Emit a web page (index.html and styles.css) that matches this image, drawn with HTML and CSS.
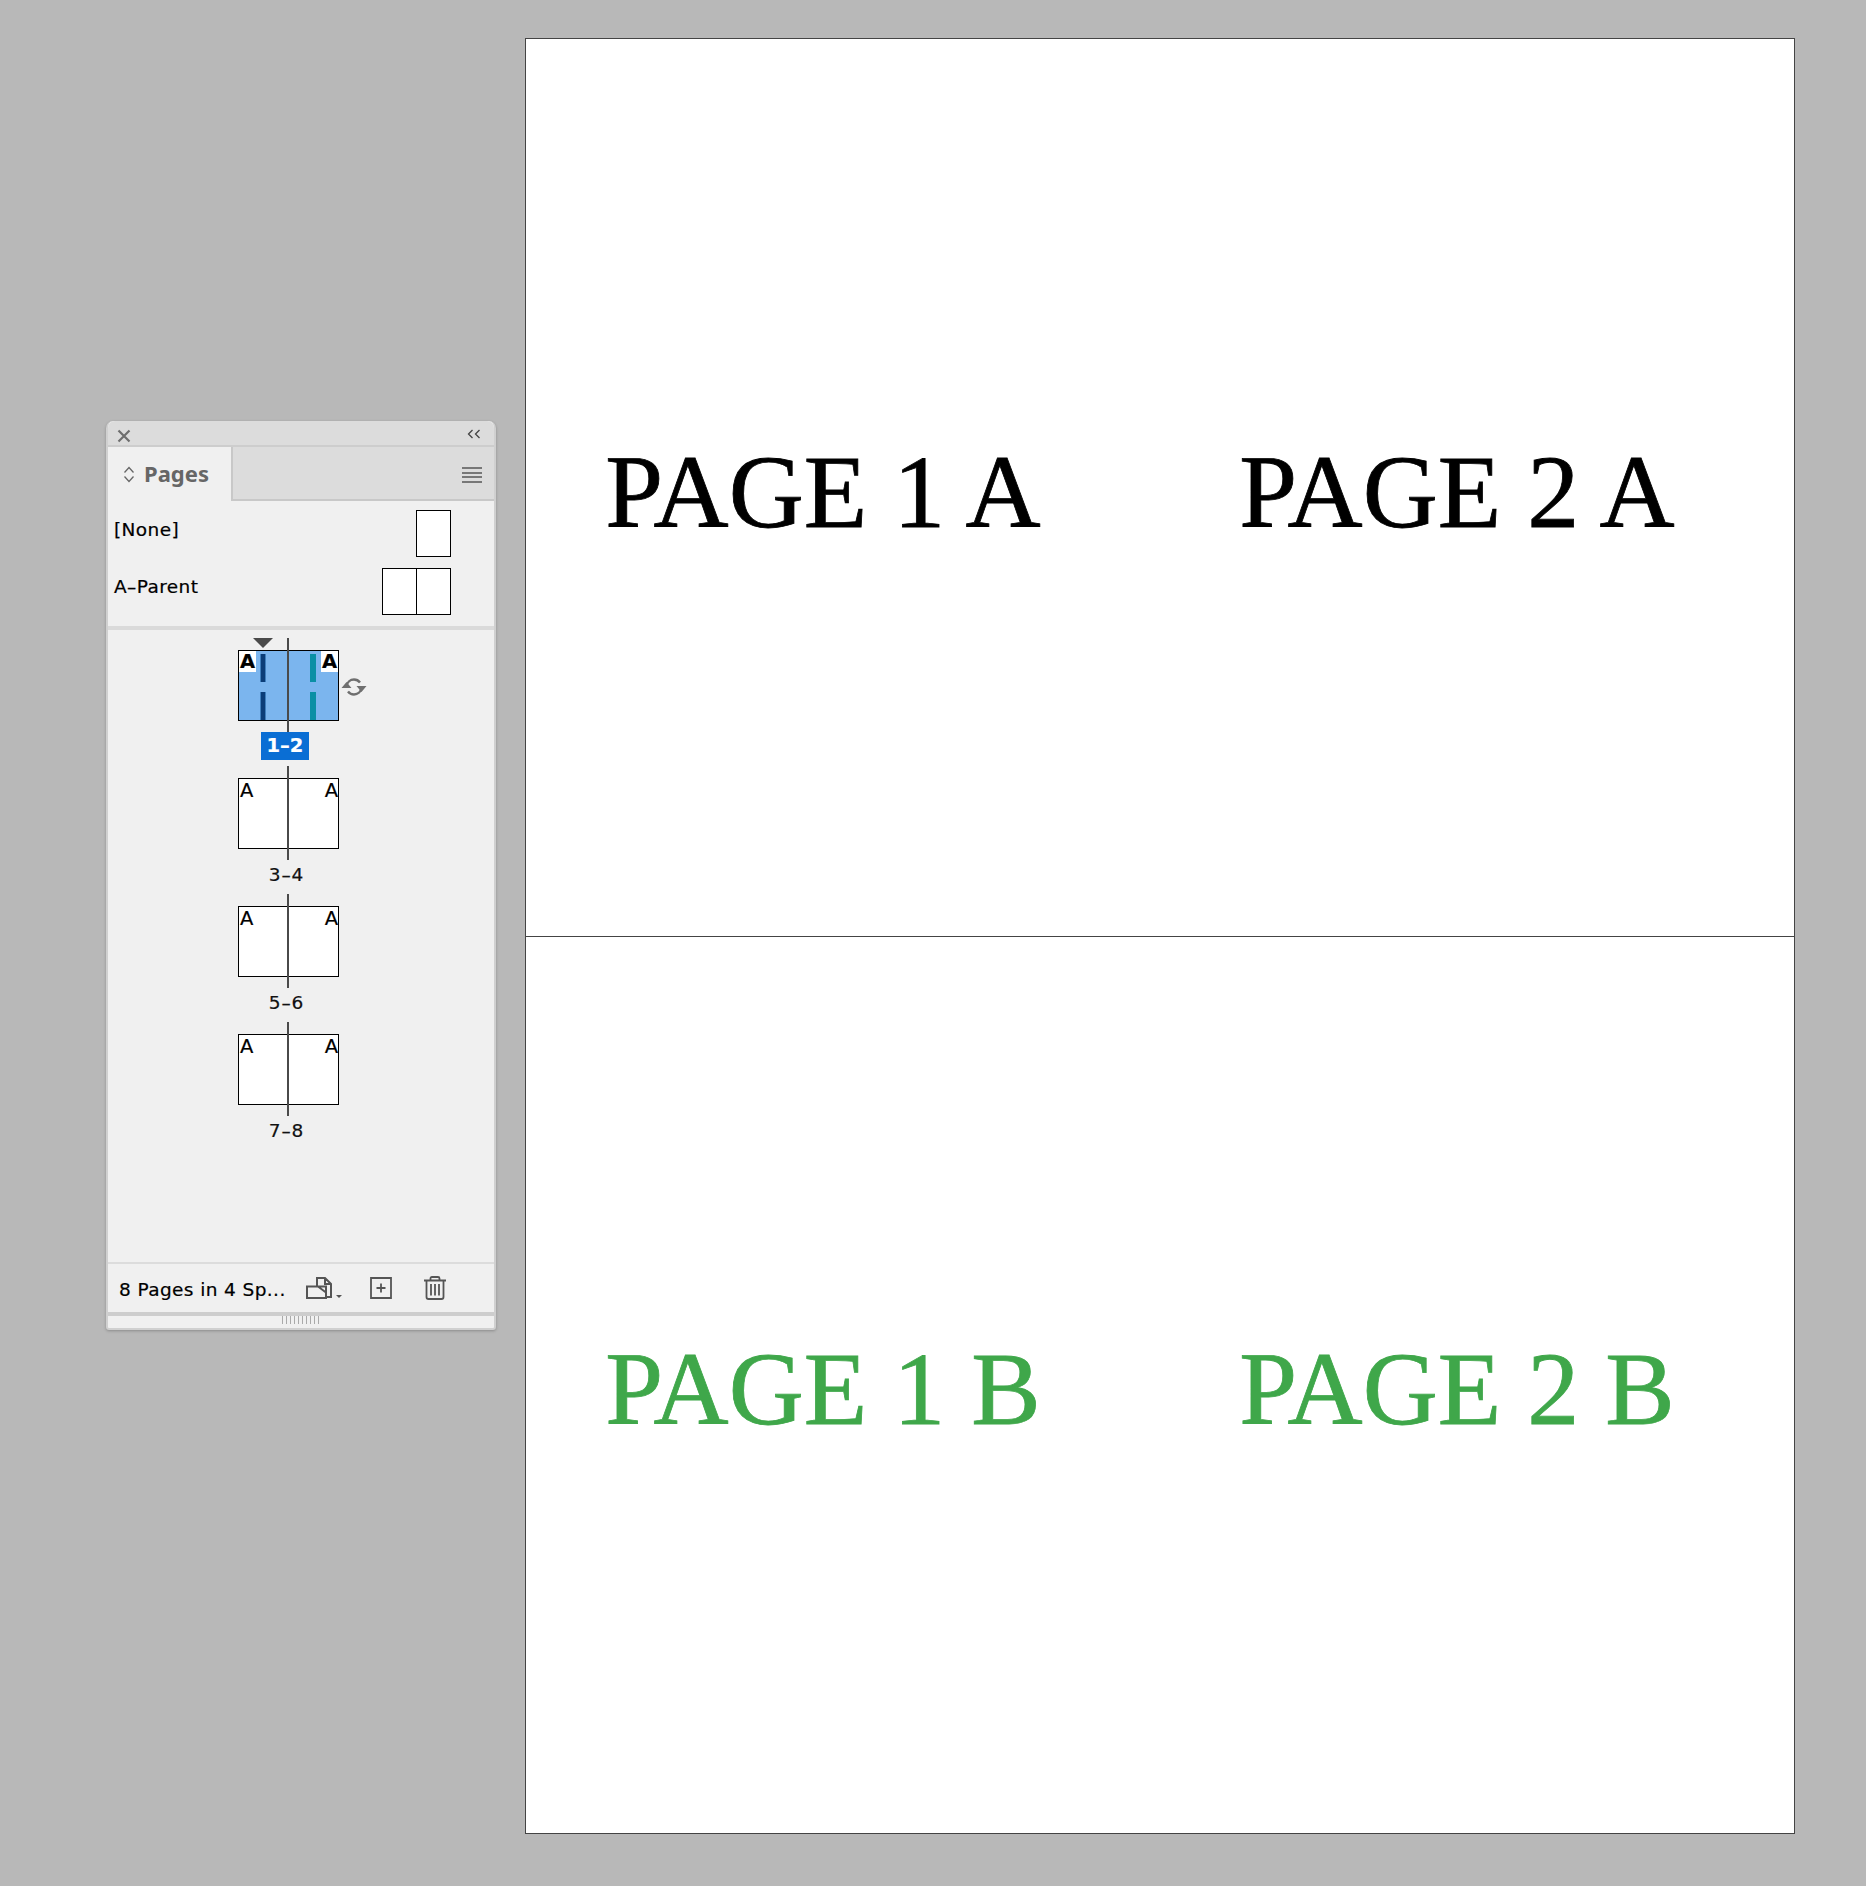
FILE: index.html
```html
<!DOCTYPE html>
<html lang="en">
	<head>
		<meta charset="UTF-8" />
		<title>Pages</title>
		<link rel="stylesheet" href="styles.css">
	</head>
	<body>
		<div class="panel">
			<div class="titlebar">
				<svg class="close" width="14" height="14" viewBox="0 0 14 14"><path d="M1.500 1.500l11 11M12.500 1.500l-11 11" stroke="#6e6e6e" stroke-width="2.200" fill="none"/></svg>
				<svg class="collapse" width="14" height="10" viewBox="0 0 14 10"><path d="M5.500 1L1.500 5l4 4M12.500 1l-4 4 4 4" stroke="#444" stroke-width="1.300" fill="none"/></svg>
			</div>
			<div class="tabbar">
				<div class="tab">
					<svg width="12" height="17" viewBox="0 0 12 17"><path d="M1.500 6.500L6 1.500l4.500 5M1.500 10.500L6 15.500l4.500-5" stroke="#666" stroke-width="1.300" fill="none"/></svg>
					<span>Pages</span>
				</div>
				<div class="burger"><i></i><i></i><i></i><i></i></div>
			</div>
			<div class="parents">
				<div class="parent">
					<span>[None]</span>
					<div class="thumb"><b></b></div>
				</div>
				<div class="parent">
					<span>A–Parent</span>
					<div class="thumb"><b></b><b></b></div>
				</div>
			</div>
			<div class="spreads">
				<div class="spread current">
					<div class="marker"></div>
					<div class="sheet">
						<div class="leaf"><em>A</em><s class="bar navy top"></s><s class="bar navy bottom"></s></div>
						<div class="leaf right"><em>A</em><s class="bar teal top"></s><s class="bar teal bottom"></s></div>
					</div>
					<svg class="rotate" width="27" height="20" viewBox="0 0 27 20"><path d="M5.500 9.500C6 5 9.500 2.500 13 2.500c2.500 0 4.500 1 6 3M20.500 10.500c-.5 4.500-4 7-7.500 7-2.500 0-4.500-1-6-3" stroke="#6f6f6f" stroke-width="2.400" fill="none"/><path d="M5.500 5L.5 11h10zM20.500 15l-5-6h10z" fill="#6f6f6f"/></svg>
					<div class="label">1–2</div>
				</div>
				<div class="spread">
					<div class="sheet">
						<div class="leaf"><em>A</em></div>
						<div class="leaf right"><em>A</em></div>
					</div>
					<div class="label">3–4</div>
				</div>
				<div class="spread">
					<div class="sheet">
						<div class="leaf"><em>A</em></div>
						<div class="leaf right"><em>A</em></div>
					</div>
					<div class="label">5–6</div>
				</div>
				<div class="spread">
					<div class="sheet">
						<div class="leaf"><em>A</em></div>
						<div class="leaf right"><em>A</em></div>
					</div>
					<div class="label">7–8</div>
				</div>
			</div>
			<div class="foot">
				<span class="count">8 Pages in 4 Sp...</span>
				<svg class="foot-ico" width="32" height="24" viewBox="0 0 32 24"><path d="M1 10.500h19v11.500H1zM11 10.500V2h8l6 6v13h-5M19 2v6h6M12 10.500l8 6" stroke="#555" stroke-width="2" fill="none"/><path d="M30 19h6l-3 3z" fill="#555"/></svg>
				<svg class="foot-ico" width="22" height="22" viewBox="0 0 22 22"><path d="M1 1h20v20H1zM11 6.500v9M6.500 11h9" stroke="#555" stroke-width="1.800" fill="none"/></svg>
				<svg class="foot-ico" width="22" height="24" viewBox="0 0 22 24"><path d="M0 4.500h22M6.500 4.500V2.500Q6.500 1 8 1h6q1.500 0 1.500 1.500v2M2.500 4.500V21q0 2 2 2h13q2 0 2-2V4.500M7 8v11.500M11 8v11.500M15 8v11.500" stroke="#555" stroke-width="1.800" fill="none"/></svg>
			</div>
			<div class="grip"><div></div></div>
		</div>

		<div class="doc">
			<div class="page">
				<span>PAGE 1 A</span>
				<span>PAGE 2 A</span>
			</div>
			<div class="page green">
				<span>PAGE 1 B</span>
				<span>PAGE 2 B</span>
			</div>
		</div>
	</body>
</html>
```

FILE: styles.css
```css
body {
	margin: 0;
	box-sizing: border-box;
	height: 1886px;
	padding: 38px 71px 52px 106px;
	background: #b8b8b8;
	display: flex;
	align-items: flex-start;
	gap: 29px;
	font-family: "DejaVu Sans", sans-serif;
	overflow: hidden;
}

/* panel */
.panel {
	width: 390px;
	margin-top: 383px;
	box-sizing: border-box;
	background: #f0f0f0;
	border: 2px solid #d0d0d0;
	border-top: 0;
	border-radius: 7px 7px 3px 3px;
	box-shadow: 0 1px 3px rgba(0, 0, 0, 0.25);
	color: #000;
	font-size: 18.5px;
	letter-spacing: 0.4px;
	-webkit-text-stroke: 0.2px currentColor;
}
.titlebar {
	height: 24px;
	padding: 0 13px 0 9px;
	display: flex;
	align-items: center;
	justify-content: space-between;
	background: #dcdcdc;
	border-bottom: 2px solid #cdcdcd;
	border-radius: 7px 7px 0 0;
}
.close {
	margin-top: 5px;
}
.collapse {
	margin-top: 2px;
}
.tabbar {
	height: 52px;
	display: flex;
	justify-content: space-between;
	background: #dcdcdc;
	border-bottom: 2px solid #c8c8c8;
}
.tab {
	width: 125px;
	height: 54px;
	padding-left: 15px;
	box-sizing: border-box;
	display: flex;
	align-items: center;
	gap: 9px;
	background: #f0f0f0;
	border-right: 2px solid #c8c8c8;
	color: #666;
	font-family: "Noto Sans", sans-serif;
	font-size: 22px;
	font-weight: 700;
	letter-spacing: 0;
	-webkit-text-stroke: 0;
}
.tab span {
	margin-top: -2px;
}
.burger {
	width: 20px;
	margin: 20px 12px 0 0;
	display: flex;
	flex-direction: column;
	gap: 2.500px;
}
.burger i {
	display: block;
	height: 2px;
	background: #777;
}
.parents {
	padding-top: 9px;
	height: 129px;
	box-sizing: border-box;
	border-bottom: 4px solid #dadada;
}
.parent {
	height: 47px;
	margin-bottom: 11px;
	padding: 0 43px 0 6px;
	display: flex;
	justify-content: space-between;
}
.parent span {
	padding-top: 9px;
	line-height: 22px;
}
.parent + .parent span {
	padding-top: 8px;
}
.thumb {
	display: flex;
	height: 47px;
	border: 1px solid #000;
	box-sizing: border-box;
	background: #fff;
}
.thumb b {
	display: block;
	width: 33px;
}
.thumb b + b {
	border-left: 1px solid #000;
}

/* spreads */
.spreads {
	height: 632px;
	padding-top: 8px;
	box-sizing: border-box;
}
.spread {
	position: relative;
	width: 101px;
	height: 128px;
	margin-left: 130px;
}
.sheet {
	position: relative;
	top: 12px;
	display: flex;
	height: 71px;
	box-sizing: border-box;
	border: 1px solid #000;
	background: #fff;
}
.sheet::after {
	content: "";
	position: absolute;
	left: 48px;
	top: -13px;
	width: 2px;
	height: 94px;
	background: #4a4a4a;
}
.leaf {
	position: relative;
	flex: 1;
	font-size: 19.5px;
	line-height: 22px;
	letter-spacing: 0;
}
.leaf em {
	position: absolute;
	top: 1px;
	left: 1px;
	font-style: normal;
}
.leaf.right em {
	left: auto;
	right: 0;
}
.current .sheet {
	background: #7bb5ee;
}
.current .leaf em {
	left: 0;
	height: 21px;
	padding: 0 1px;
	top: 0;
	background: #fff;
	font-weight: 700;
}
.current .leaf.right em {
	left: auto;
}
.bar {
	position: absolute;
	width: 6px;
	height: 28px;
}
.bar.navy {
	left: 21px;
	background: #0b3d78;
	border: solid #3f7fbd;
	border-width: 0 1px;
	box-sizing: border-box;
}
.bar.teal {
	right: 22px;
	background: #0a8fa5;
}
.bar.top {
	top: 3px;
}
.bar.bottom {
	top: 41px;
}
.marker {
	position: absolute;
	left: 15px;
	top: 0;
	border: 10px solid transparent;
	border-top: 10px solid #4a4a4a;
	border-bottom: 0;
}
.rotate {
	position: absolute;
	left: 103px;
	top: 39px;
}
.label {
	position: absolute;
	left: 0;
	right: 4px;
	top: 96px;
	text-align: center;
	line-height: 26px;
	letter-spacing: 0.9px;
	color: #111;
}
.current .label {
	left: 23px;
	right: 30px;
	top: 94px;
	height: 28px;
	font-size: 19.5px;
	line-height: 28px;
	background: #0a6ed4;
	color: #fff;
	font-weight: 700;
	letter-spacing: 0;
}

/* footer */
.foot {
	height: 48px;
	padding-left: 11px;
	display: flex;
	align-items: center;
	border-top: 2px solid #dcdcdc;
	border-bottom: 4px solid #cdcdcd;
}
.count {
	width: 187px;
	padding-top: 3px;
	white-space: nowrap;
}
.foot-ico {
	overflow: visible;
	margin-right: 32px;
}
.grip {
	height: 12px;
	box-sizing: border-box;
}
.grip div {
	width: 39px;
	height: 8px;
	margin-left: 174px;
	background: repeating-linear-gradient(90deg, #aaa 0 1px, transparent 1px 4px);
}

/* document */
.doc {
	flex: 1;
	height: 1796px;
	display: flex;
	flex-direction: column;
	background: #fff;
	border: 1px solid #444;
	box-sizing: border-box;
}
.page {
	flex: 1;
	padding-top: 8px;
	display: grid;
	grid-template-columns: 1fr 1fr;
	align-items: center;
	justify-items: center;
	font-family: "Liberation Serif", serif;
	font-size: 104px;
	-webkit-text-stroke: 0.8px currentColor;
	color: #000;
}
.page span {
	margin-right: 40px;
}
.page + .page {
	border-top: 1px solid #444;
}
.green {
	color: #3fa74a;
}
```
